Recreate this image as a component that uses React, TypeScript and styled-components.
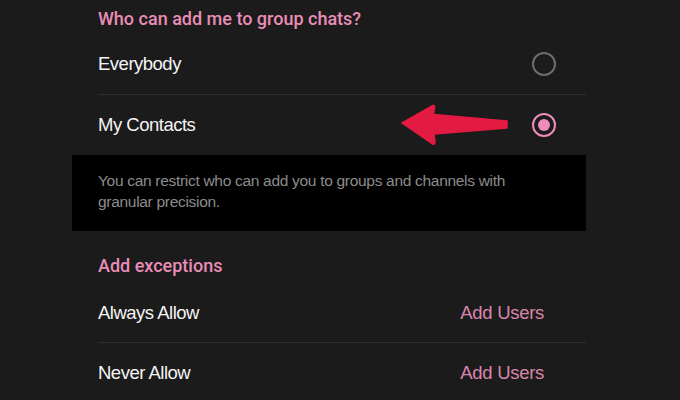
import React from "react";
import styled, { createGlobalStyle } from "styled-components";

const Global = createGlobalStyle`
  html, body {
    margin: 0;
    padding: 0;
    background: #1b1b1b;
    width: 680px;
    height: 400px;
    overflow: hidden;
  }
  body {
    font-family: "Liberation Sans", Arial, sans-serif;
    -webkit-font-smoothing: antialiased;
  }
`;

const Page = styled.div`
  margin-left: 72px;
  width: 514px;
  display: flex;
  flex-direction: column;
`;

const SectionHeader = styled.div<{ $h: number }>`
  height: ${(p) => p.$h}px;
  padding-left: 26px;
  display: flex;
  align-items: flex-end;
  box-sizing: border-box;
  padding-bottom: ${(p) => (p.$h > 40 ? 6 : 4)}px;
  font-family: Roboto, "Liberation Sans", sans-serif;
  font-weight: 500;
  font-size: 18px;
  line-height: 22px;
  color: #e98db7;
`;

const Row = styled.div<{ $h: number; $divider?: boolean; $pr: number }>`
  position: relative;
  margin-left: 26px;
  height: ${(p) => p.$h}px;
  padding-right: ${(p) => p.$pr}px;
  display: flex;
  align-items: center;
  justify-content: space-between;
  box-sizing: border-box;
  border-bottom: ${(p) => (p.$divider ? "1px solid #2c2c2c" : "none")};
`;

const Label = styled.span`
  font-size: 18.5px;
  color: #f4f4f4;
  letter-spacing: -0.5px;
`;

const Action = styled.span`
  font-size: 18.5px;
  color: #d986ad;
  letter-spacing: -0.3px;
`;

const Radio = styled.span<{ $on?: boolean }>`
  width: 24px;
  height: 24px;
  border-radius: 50%;
  box-sizing: border-box;
  border: ${(p) => (p.$on ? "2.5px solid #ee8cba" : "2px solid #6c6c6c")};
  display: flex;
  align-items: center;
  justify-content: center;
  &::after {
    content: "";
    display: ${(p) => (p.$on ? "block" : "none")};
    width: 12px;
    height: 12px;
    border-radius: 50%;
    background: #ee8cba;
  }
`;

const InfoBox = styled.div`
  background: #000;
  height: 76px;
  box-sizing: border-box;
  padding: 15px 40px 0 26px;
  font-size: 15.5px;
  line-height: 21px;
  color: #8c8c8c;
  letter-spacing: -0.3px;
`;

const ArrowMark = styled.svg`
  position: absolute;
  left: 302px;
  top: 9px;
`;

const Arrow = () => (
  <ArrowMark width="110" height="42" viewBox="0 0 110 42">
    <path
      d="M2 19 L33 1.5 Q35 1 34.5 4 L33.5 10.5 L107 17 L107 24 L34 30 L35 38 Q35 41 32.5 40 Z"
      fill="#e31a42"
      stroke="#e31a42"
      strokeWidth="1.5"
      strokeLinejoin="round"
    />
  </ArrowMark>
);

export default function App() {
  return (
    <>
      <Global />
      <Page>
        <SectionHeader $h={34}>Who can add me to group chats?</SectionHeader>
        <Row $h={61} $divider $pr={30}>
          <Label>Everybody</Label>
          <Radio />
        </Row>
        <Row $h={60} $pr={30}>
          <Label>My Contacts</Label>
          <Arrow />
          <Radio $on />
        </Row>
        <InfoBox>
          You can restrict who can add you to groups and channels with granular precision.
        </InfoBox>
        <SectionHeader $h={52}>Add exceptions</SectionHeader>
        <Row $h={60} $divider $pr={42}>
          <Label>Always Allow</Label>
          <Action>Add Users</Action>
        </Row>
        <Row $h={60} $pr={42}>
          <Label>Never Allow</Label>
          <Action>Add Users</Action>
        </Row>
      </Page>
    </>
  );
}
